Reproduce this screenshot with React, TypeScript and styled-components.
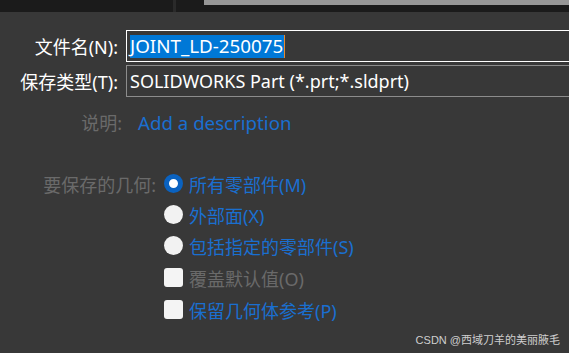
import React from 'react';
import styled, { createGlobalStyle } from 'styled-components';

const GlobalStyle = createGlobalStyle`
  html, body {
    margin: 0;
    padding: 0;
    background: #383838;
  }
  body {
    font-family: "Noto Sans", "Noto Sans CJK SC", sans-serif;
    overflow: hidden;
  }
`;

const Page = styled.div`
  position: relative;
  width: 569px;
  height: 353px;
  background: #383838;
  overflow: hidden;
`;

const TopBar = styled.div`
  display: flex;
  height: 12px;
  background: #1b1b1b;

  .left {
    width: 173px;
  }

  .divider {
    width: 3px;
    background: #2a2a2a;
  }

  .middle {
    width: 28px;
  }

  .scroll {
    flex: 1;
    height: 5px;
    background: #979797;
  }
`;

const FileGrid = styled.div`
  display: grid;
  grid-template-columns: 118px 1fr;
  column-gap: 8px;
  row-gap: 3px;
  align-items: center;
  margin-top: 18px;
`;

const Label = styled.label<{ $muted?: boolean }>`
  text-align: right;
  font-size: 18px;
  white-space: nowrap;
  color: ${p => (p.$muted ? '#6a6a6a' : '#ffffff')};
`;

const Field = styled.div<{ $focused?: boolean }>`
  display: flex;
  align-items: center;
  height: 30px;
  margin-right: -10px;
  padding-left: 3px;
  border: 1px solid ${p => (p.$focused ? '#ffffff' : '#8c8c8c')};
  color: #ffffff;
  font-size: 18px;
  white-space: nowrap;
`;

const Selected = styled.span`
  display: inline-flex;
  align-items: center;
  height: 23px;
  padding-right: 1px;
  background: #0078d7;
  color: #ffffff;
  font-size: 18.8px;
  border-right: 1px solid #e88a2e;
`;

const DescRow = styled.div`
  display: grid;
  grid-template-columns: 122px 1fr;
  column-gap: 16px;
  align-items: center;
  margin-top: 12px;
  height: 26px;
`;

const LinkText = styled.span`
  color: #1a6fd0;
  font-size: 18.7px;
`;

const GeometryGrid = styled.div`
  display: grid;
  grid-template-columns: 156px 1fr;
  column-gap: 8px;
  margin-top: 33px;
`;

const OptionList = styled.div`
  display: flex;
  flex-direction: column;
`;

const Option = styled.div<{ $muted?: boolean; $tall?: boolean; $end?: boolean }>`
  display: flex;
  align-items: center;
  justify-content: ${p => (p.$end ? 'flex-end' : 'flex-start')};
  gap: 6px;
  height: ${p => (p.$tall ? 33 : 31)}px;
  font-size: 18px;
  white-space: nowrap;
  color: ${p => (p.$muted ? '#6a6a6a' : '#1a6fd0')};
`;

const Radio = styled.span<{ $checked?: boolean }>`
  display: inline-block;
  flex: none;
  box-sizing: border-box;
  width: 19px;
  height: 19px;
  border-radius: 50%;
  background: ${p => (p.$checked ? '#ffffff' : '#f2f2f2')};
  border: ${p => (p.$checked ? '5.5px solid #0a62c0' : 'none')};
`;

const Checkbox = styled.span`
  display: inline-block;
  flex: none;
  width: 19px;
  height: 19px;
  border-radius: 3px;
  background: #f4f4f4;
`;

const Watermark = styled.div`
  position: absolute;
  right: 9px;
  bottom: 6px;
  font-family: "Liberation Sans", "Noto Sans CJK SC", sans-serif;
  font-size: 11px;
  color: #cfcfcf;
`;

export default function App() {
  return (
    <Page>
      <GlobalStyle />
      <TopBar>
        <div className="left" />
        <div className="divider" />
        <div className="middle" />
        <div className="scroll" />
      </TopBar>

      <FileGrid>
        <Label>文件名(N):</Label>
        <Field $focused>
          <Selected>JOINT_LD-250075</Selected>
        </Field>
        <Label>保存类型(T):</Label>
        <Field>SOLIDWORKS Part (*.prt;*.sldprt)</Field>
      </FileGrid>

      <DescRow>
        <Label $muted>说明:</Label>
        <LinkText>Add a description</LinkText>
      </DescRow>

      <GeometryGrid>
        <Option $muted $end>
          要保存的几何:
        </Option>
        <OptionList>
          <Option>
            <Radio $checked />
            所有零部件(M)
          </Option>
          <Option>
            <Radio />
            外部面(X)
          </Option>
          <Option>
            <Radio />
            包括指定的零部件(S)
          </Option>
          <Option $muted $tall>
            <Checkbox />
            覆盖默认值(O)
          </Option>
          <Option>
            <Checkbox />
            保留几何体参考(P)
          </Option>
        </OptionList>
      </GeometryGrid>

      <Watermark>CSDN @西域刀羊的美丽腋毛</Watermark>
    </Page>
  );
}
